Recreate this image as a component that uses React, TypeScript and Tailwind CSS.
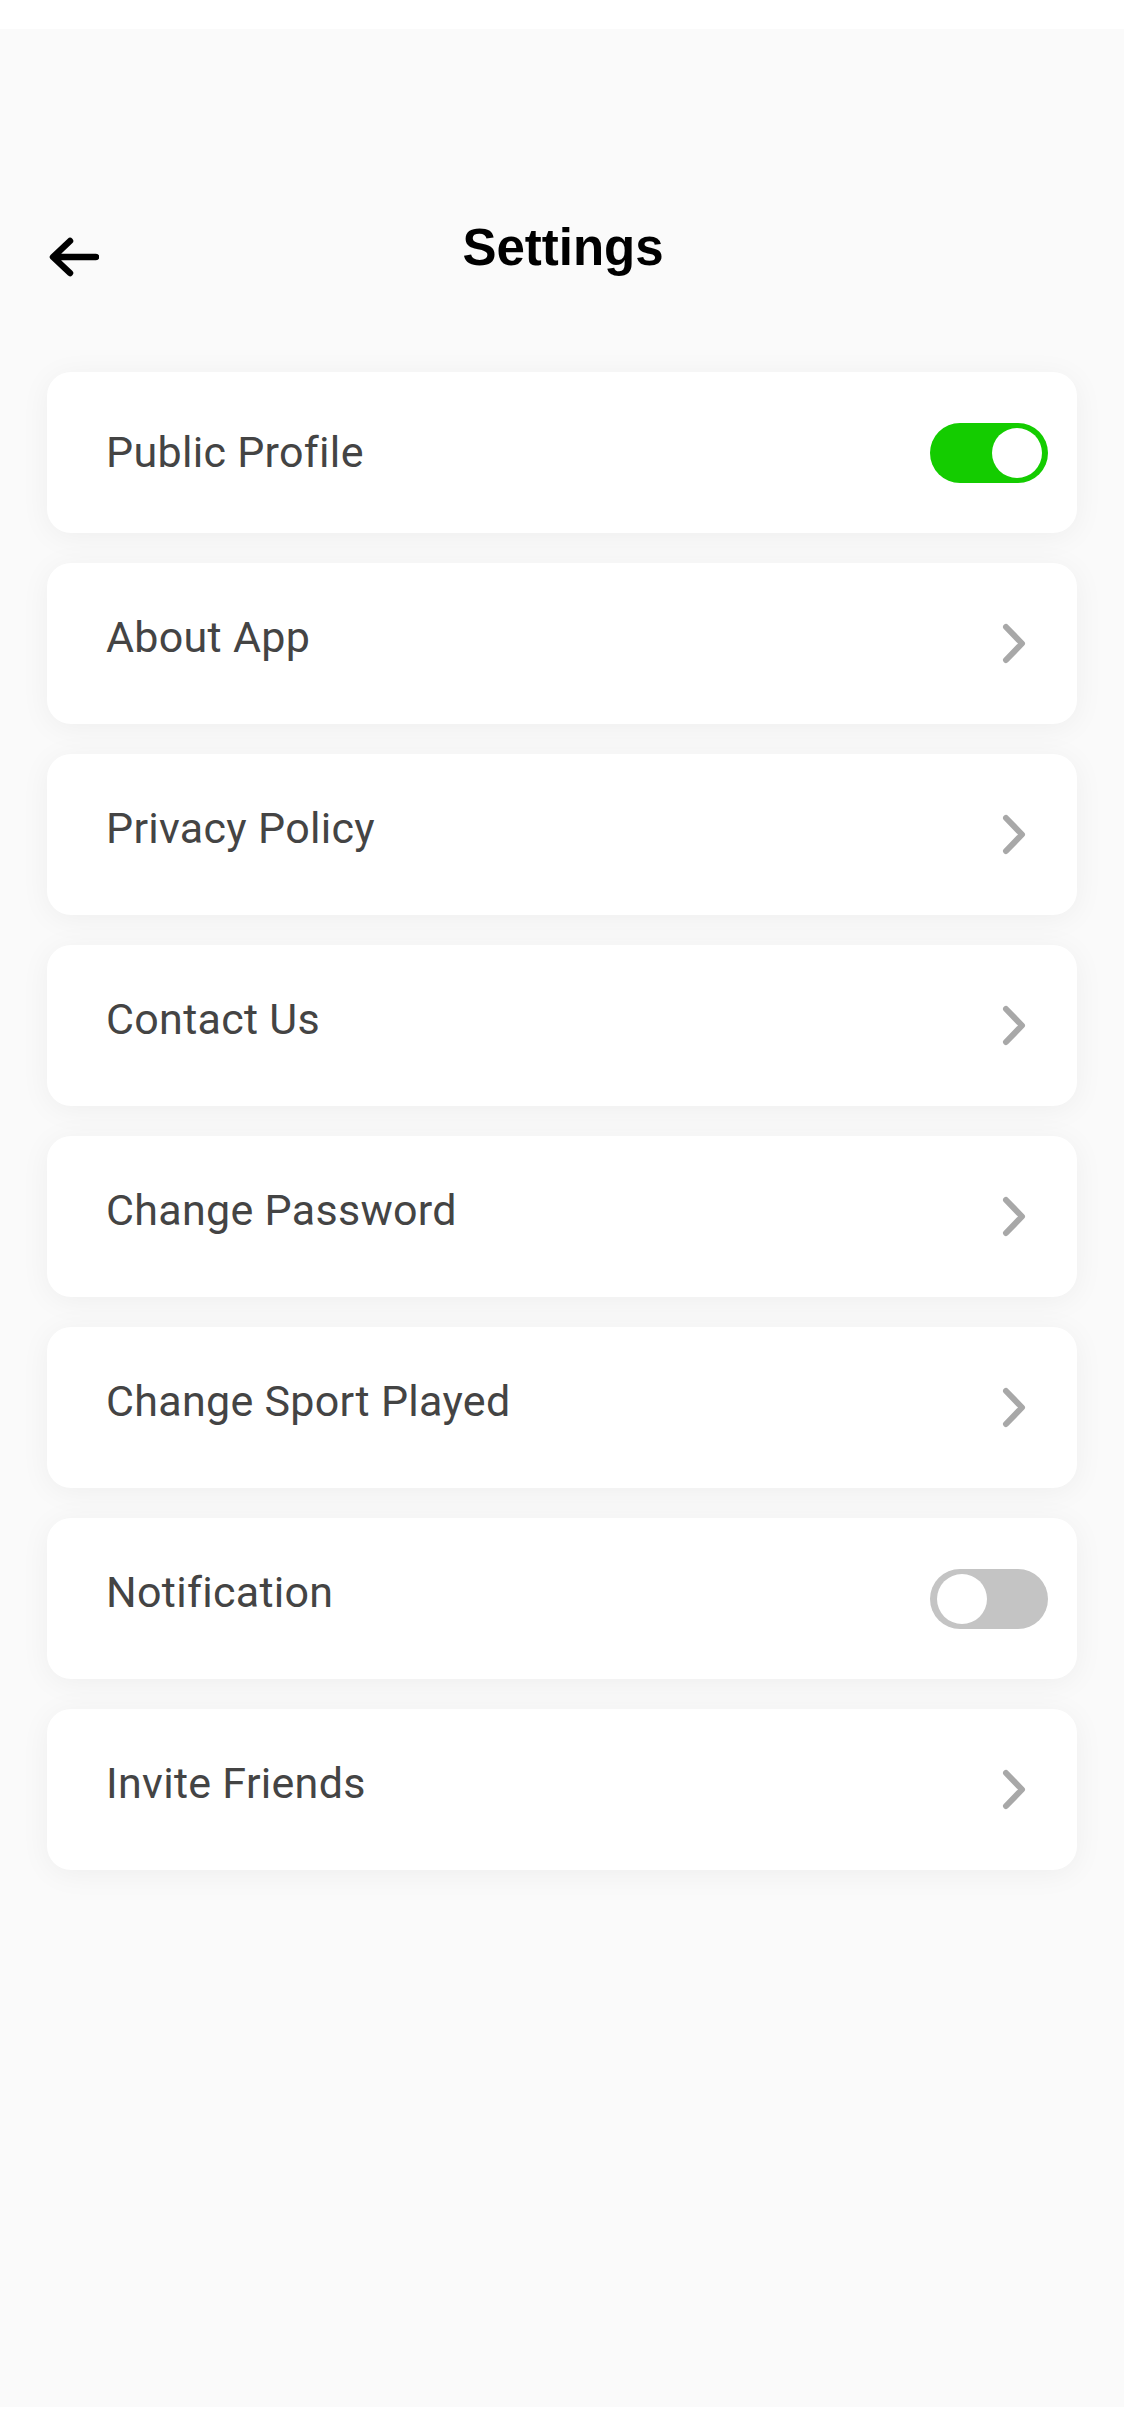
import React from 'react';

type Row = { label: string; kind: 'toggle' | 'link'; on?: boolean };

const rows: Row[] = [
  { label: 'Public Profile', kind: 'toggle', on: true },
  { label: 'About App', kind: 'link' },
  { label: 'Privacy Policy', kind: 'link' },
  { label: 'Contact Us', kind: 'link' },
  { label: 'Change Password', kind: 'link' },
  { label: 'Change Sport Played', kind: 'link' },
  { label: 'Notification', kind: 'toggle', on: false },
  { label: 'Invite Friends', kind: 'link' },
];

const Toggle: React.FC<{ on: boolean }> = ({ on }) => (
  <div
    className={
      on
        ? 'w-[118px] h-[60px] rounded-full bg-[#14cc00] flex items-center justify-end px-[6px]'
        : 'w-[118px] h-[60px] rounded-full bg-[#c4c4c4] flex items-center justify-start px-[7px]'
    }
  >
    <div className="w-[50px] h-[50px] rounded-full bg-white" />
  </div>
);

const Chevron = () => (
  <svg width="24" height="41" viewBox="0 0 24 41" fill="none" className="mr-[22px]">
    <path d="M4 4 L20 20.5 L4 37" stroke="#a8a8a8" strokeWidth={6} strokeLinecap="round" strokeLinejoin="round" />
  </svg>
);

export default function App() {
  return (
    <div className="min-h-[2436px] bg-white py-[29px]">
      <div className="h-[2378px] bg-[#fafafa] pt-[189px]">
        {/* header */}
        <div className="h-[80px] grid grid-cols-[1fr_auto_1fr] items-center pl-[49px] pr-[47px]">
          <svg width="50" height="42" viewBox="0 0 50 42" fill="none">
            <path d="M47 20 H5 M21 4 L4 20 L21 36" stroke="#000" strokeWidth={6.5} strokeLinecap="round" strokeLinejoin="round" />
          </svg>
          <h1
            className="mb-[22px] text-[51px] leading-none font-bold text-black"
            style={{ fontFamily: '"Liberation Sans", Arial, sans-serif' }}
          >
            Settings
          </h1>
          <div />
        </div>

        {/* list */}
        <div className="mt-[74px] px-[47px] flex flex-col gap-[30px]">
          {rows.map((r, i) => (
            <div
              key={r.label}
              className="h-[161px] rounded-[24px] bg-white shadow-[0_4px_30px_rgba(0,0,0,0.05)] flex items-center justify-between pl-[59px] pr-[29px]"
            >
              <span
                className={
                  i === 0
                    ? 'text-[43px] leading-none tracking-[0.3px] text-[#444444]'
                    : 'text-[43px] leading-none tracking-[0.3px] text-[#444444] mb-[12px]'
                }
                style={{ fontFamily: 'Roboto, "Noto Sans", sans-serif' }}
              >
                {r.label}
              </span>
              {r.kind === 'toggle' ? <Toggle on={!!r.on} /> : <Chevron />}
            </div>
          ))}
        </div>
      </div>
    </div>
  );
}
